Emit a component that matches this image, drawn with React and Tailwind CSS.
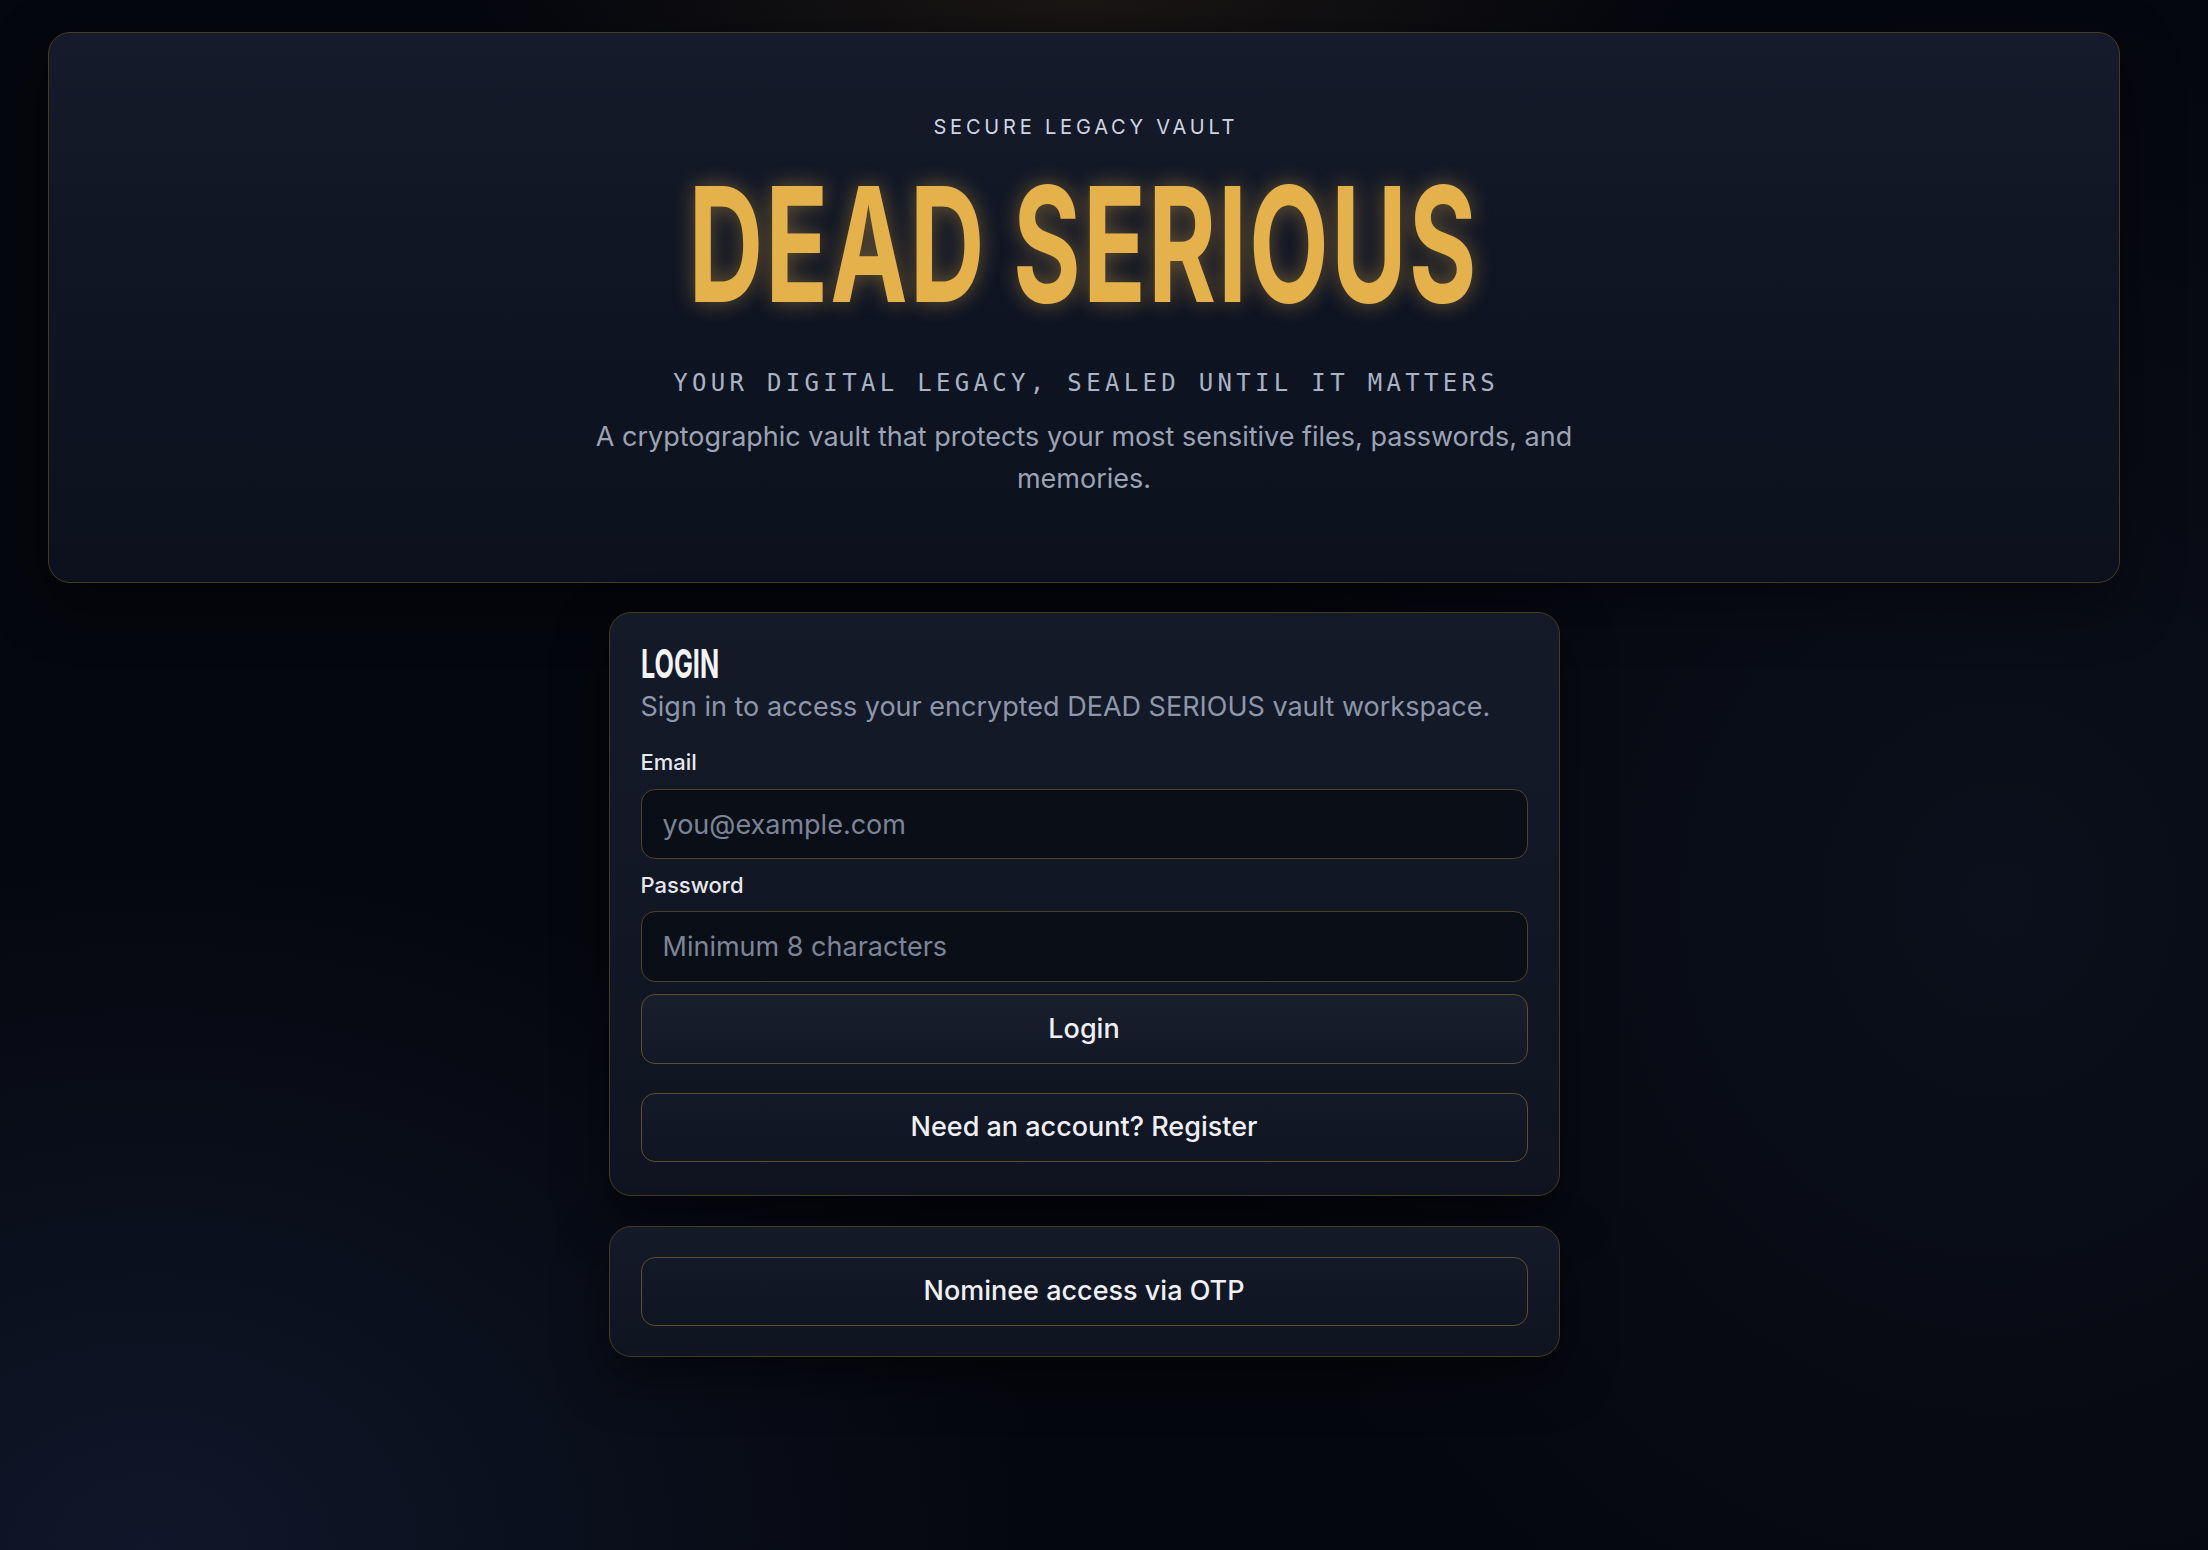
import React from "react";

export default function App() {
  return (
    <div className="min-h-[1550px] w-full bg-[#05070e] bg-[radial-gradient(ellipse_600px_120px_at_1080px_0px,rgba(120,90,45,0.18),transparent),radial-gradient(ellipse_900px_700px_at_150px_1550px,rgba(25,36,64,0.55),transparent),radial-gradient(ellipse_800px_900px_at_2000px_900px,rgba(18,26,44,0.45),transparent)] font-['Inter','Noto_Sans',sans-serif]">
      <div className="flex flex-col items-center pl-[48px] pr-[88px] pt-[32px] pb-[40px]">
        {/* Hero card */}
        <section className="w-full rounded-[22px] border border-[#463a26] bg-[linear-gradient(180deg,#151b2a_0%,#0f1422_55%,#0c111d_100%)] pt-[80px] pb-[82px] px-10 flex flex-col items-center text-center shadow-[0_20px_60px_rgba(0,0,0,0.45)]">
          <p className="text-[20px] leading-[28px] tracking-[0.19em] text-[#cfd5e0] pl-[0.19em]">
            SECURE LEGACY VAULT
          </p>
          <h1 className="mt-[29px] h-[148px] flex items-center justify-center">
            <span className="inline-block scale-x-[0.647] font-['Inter',sans-serif] font-bold text-[160px] leading-[148px] tracking-[0.02em] text-[#e5b14b] [text-shadow:0_0_26px_rgba(229,177,75,0.42)]">
              DEAD SERIOUS
            </span>
          </h1>
          <p className="mt-[49px] font-['DejaVu_Sans_Mono','Liberation_Mono',monospace] text-[24px] leading-[32px] tracking-[0.18em] text-[#aab3c5] pl-[0.18em]">
            YOUR DIGITAL LEGACY, SEALED UNTIL IT MATTERS
          </p>
          <p className="mt-[17px] max-w-[1040px] text-[27px] leading-[42px] text-[#9ba3b4]">
            A cryptographic vault that protects your most sensitive files, passwords, and memories.
          </p>
        </section>

        {/* Login card */}
        <section className="mt-[29px] w-[951px] rounded-[22px] border border-[#463a26] bg-[linear-gradient(180deg,#141a28_0%,#0f1420_100%)] px-[31px] pt-[31px] pb-[33px] shadow-[0_20px_50px_rgba(0,0,0,0.5)]">
          <h2 className="h-[40px] flex items-center">
            <span className="inline-block origin-left scale-x-[0.63] font-bold text-[40px] leading-[40px] text-[#f3f4f8]">
              LOGIN
            </span>
          </h2>
          <p className="mt-[4px] text-[27px] leading-[38px] text-[#8e97aa]">
            Sign in to access your encrypted DEAD SERIOUS vault workspace.
          </p>
          <label className="mt-[20px] block text-[22px] leading-[32px] font-medium text-[#e6e8ee]">
            Email
          </label>
          <input
            type="email"
            placeholder="you@example.com"
            className="mt-[11px] block w-full h-[70px] rounded-[14px] border border-[#4f422c] bg-[#0a0e17] px-[21px] text-[27px] text-[#e6e8ee] placeholder:text-[#7c8597] outline-none"
          />
          <label className="mt-[10px] block text-[22px] leading-[32px] font-medium text-[#e6e8ee]">
            Password
          </label>
          <input
            type="password"
            placeholder="Minimum 8 characters"
            className="mt-[10px] block w-full h-[71px] rounded-[14px] border border-[#4f422c] bg-[#0a0e17] px-[21px] text-[27px] text-[#e6e8ee] placeholder:text-[#7c8597] outline-none"
          />
          <button className="mt-[12px] block w-full h-[70px] rounded-[14px] border border-[#5e4d2f] bg-[linear-gradient(180deg,#1a1f2e_0%,#121826_100%)] text-[27px] font-medium text-[#eef0f6]">
            Login
          </button>
          <button className="mt-[29px] block w-full h-[69px] rounded-[14px] border border-[#5e4d2f] bg-[linear-gradient(180deg,#131a27_0%,#0f1521_100%)] text-[27px] font-medium text-[#eef0f6]">
            Need an account? Register
          </button>
        </section>

        {/* Nominee card */}
        <section className="mt-[30px] w-[951px] rounded-[22px] border border-[#463a26] bg-[linear-gradient(180deg,#141a28_0%,#0f1420_100%)] px-[31px] py-[30px] shadow-[0_20px_50px_rgba(0,0,0,0.5)]">
          <button className="block w-full h-[69px] rounded-[14px] border border-[#5e4d2f] bg-[linear-gradient(180deg,#131a27_0%,#0f1521_100%)] text-[27px] font-medium text-[#eef0f6]">
            Nominee access via OTP
          </button>
        </section>
      </div>
    </div>
  );
}
